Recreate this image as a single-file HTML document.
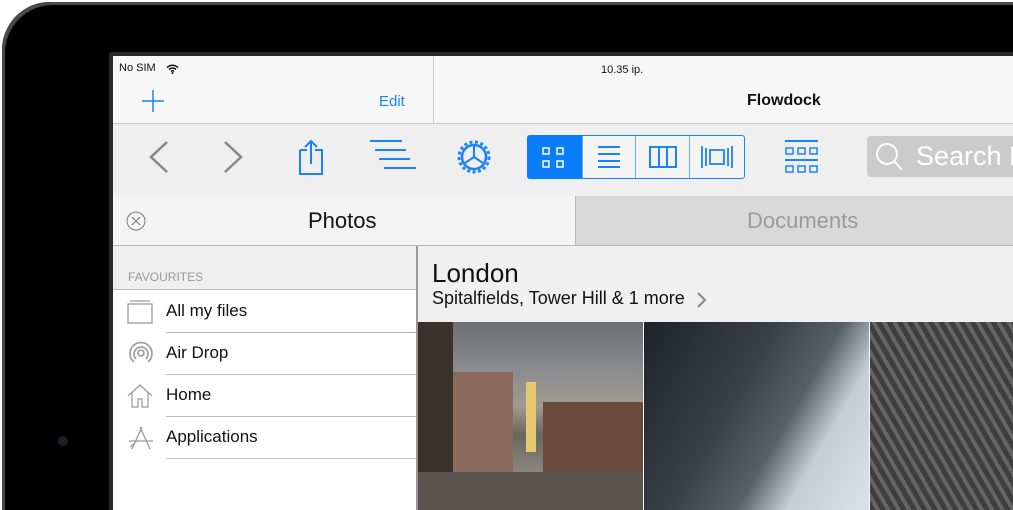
<!DOCTYPE html><html><head><style>
html,body{margin:0;width:1013px;height:510px;overflow:hidden}
body{background:#fff;font-family:"Liberation Sans",sans-serif;position:relative}
.a{position:absolute}
</style></head><body>
<div class="a" style="left:0;top:0;width:1013px;height:510px;overflow:hidden">
<div class="a" style="left:2px;top:2px;width:1011px;height:508px;border-radius:48px 0 0 0;background:#000;box-shadow:inset 3px 3px 0 0 #4a4a4a"></div>
<div class="a" style="left:109px;top:52px;width:904px;height:458px;background:#2a2a2a;border-radius:3px 0 0 0"></div>
<div class="a" style="left:58px;top:436px;width:10px;height:10px;border-radius:5px;background:#1c2128"></div>
<div class="a" style="left:113px;top:56px;width:900px;height:454px;background:#f7f7f7;overflow:hidden">
 <div class="a" style="left:6px;top:6px;font-size:11px;color:#111">No SIM</div>
 <svg class="a" style="left:53px;top:8px" width="13" height="10" viewBox="0 0 13 10"><path d="M1 3.5Q6.5-1 12 3.5M3 5.5Q6.5 2.5 10 5.5M5 7.5Q6.5 6 8 7.5" stroke="#111" stroke-width="1.5" fill="none"/><circle cx="6.5" cy="9" r="1" fill="#111"/></svg>
 <div class="a" style="left:488px;top:8px;font-size:11px;color:#111">10.35 ip.</div>
 <div class="a" style="left:320px;top:0;width:1px;height:68px;background:#ccc"></div>
 <svg class="a" style="left:28px;top:33px" width="24" height="24"><path d="M12 1V23M1 12H23" stroke="#1a82fb" stroke-width="1.5"/></svg>
 <div class="a" style="left:266px;top:37px;font-size:15px;color:#1a82fb">Edit</div>
 <div class="a" style="left:634px;top:36px;font-size:16px;font-weight:bold;color:#111">Flowdock</div>
 <div class="a" style="left:0;top:67px;width:900px;height:72px;background:#efefef;border-top:1px solid #c8c8c8;border-bottom:1px solid #b8b8b8"></div>
 <svg class="a" style="left:30px;top:84px" width="100" height="36"><path d="M24 2L8 17L24 32M82 2L98 17L82 32" stroke="#888" stroke-width="2.5" fill="none"/></svg>
 <svg class="a" style="left:184px;top:82px" width="30" height="38"><path d="M3 12H10M18 12H25V36H3V12M14 26V3M8 9L14 3L20 9" stroke="#1a82fb" stroke-width="2" fill="none"/></svg>
 <svg class="a" style="left:257px;top:84px" width="48" height="34"><path d="M0 1H32M5 10H36M9 19H40M14 28H46" stroke="#1a82fb" stroke-width="2"/></svg>
 <svg class="a" style="left:343px;top:83px" width="36" height="36" viewBox="0 0 36 36"><circle cx="18" cy="18" r="15" stroke="#1a82fb" stroke-width="3" fill="none" stroke-dasharray="3 2.5"/><circle cx="18" cy="18" r="12" stroke="#1a82fb" stroke-width="2.5" fill="none"/><path d="M18 18V7M18 18L27 24M18 18L9 24" stroke="#1a82fb" stroke-width="2"/></svg>
 <div class="a" style="left:414px;top:79px;width:216px;height:42px;border:1px solid #1a82fb;border-radius:3px;background:#f4f4f4"></div>
 <div class="a" style="left:414px;top:79px;width:55px;height:44px;background:#0a7cfa;border-radius:3px 0 0 3px"></div>
 <div class="a" style="left:469px;top:80px;width:1px;height:42px;background:#6aaefc"></div>
 <div class="a" style="left:522px;top:80px;width:1px;height:42px;background:#6aaefc"></div>
 <div class="a" style="left:576px;top:80px;width:1px;height:42px;background:#6aaefc"></div>
 <svg class="a" style="left:429px;top:90px" width="24" height="22"><g stroke="#fff" stroke-width="1.5" fill="none"><rect x="1" y="2" width="6" height="6"/><rect x="15" y="2" width="6" height="6"/><rect x="1" y="15" width="6" height="6"/><rect x="15" y="15" width="6" height="6"/></g></svg>
 <svg class="a" style="left:485px;top:90px" width="24" height="22"><path d="M0 1H22M0 8H22M0 15H22M0 21H22" stroke="#1a82fb" stroke-width="2"/></svg>
 <svg class="a" style="left:536px;top:90px" width="28" height="22"><path d="M1 1H27V21H1ZM10 1V21M18 1V21" stroke="#1a82fb" stroke-width="2" fill="none"/></svg>
 <svg class="a" style="left:588px;top:90px" width="32" height="22"><path d="M1 0V22M5 2V20M27 2V20M31 0V22M9 4H23V18H9Z" stroke="#1a82fb" stroke-width="1.8" fill="none"/></svg>
 <svg class="a" style="left:672px;top:84px" width="34" height="36"><g stroke="#1a82fb" stroke-width="1.5" fill="none"><path d="M0 1H33M0 20H33" stroke-width="2"/><rect x="1" y="8" width="7" height="6"/><rect x="13" y="8" width="7" height="6"/><rect x="25" y="8" width="7" height="6"/><rect x="1" y="26" width="7" height="6"/><rect x="13" y="26" width="7" height="6"/><rect x="25" y="26" width="7" height="6"/></g></svg>
 <div class="a" style="left:754px;top:80px;width:146px;height:41px;background:#cbcbcb;border-radius:4px 0 0 4px;overflow:hidden">
  <svg class="a" style="left:7px;top:6px" width="30" height="30"><circle cx="13" cy="12" r="10" stroke="#fff" stroke-width="2" fill="none"/><path d="M20 19L28 28" stroke="#fff" stroke-width="2"/></svg>
  <div class="a" style="left:49px;top:5px;font-size:27px;color:#fff;white-space:nowrap">Search M</div>
 </div>
 <div class="a" style="left:0;top:140px;width:462px;height:49px;background:#f4f4f4;border-bottom:1px solid #b8b8b8"></div>
 <div class="a" style="left:462px;top:140px;width:438px;height:49px;background:#d9d9d9;border-left:1px solid #b8b8b8;border-bottom:1px solid #b8b8b8"></div>
 <svg class="a" style="left:12px;top:154px" width="22" height="22"><circle cx="11" cy="11" r="9" stroke="#777" stroke-width="1" fill="none"/><path d="M7 7L15 15M15 7L7 15" stroke="#777" stroke-width="1"/></svg>
 <div class="a" style="left:195px;top:152px;font-size:22px;color:#111">Photos</div>
 <div class="a" style="left:634px;top:152px;font-size:22px;color:#9a9a9a">Documents</div>
 <div class="a" style="left:0;top:190px;width:303px;height:264px;background:#fff;border-right:2px solid #999"></div>
 <div class="a" style="left:0;top:190px;width:303px;height:43px;background:#efefef;border-bottom:1px solid #bbb"></div>
 <div class="a" style="left:15px;top:214px;font-size:12px;color:#999">FAVOURITES</div>
 <div class="a" style="left:53px;top:276px;width:250px;height:1px;background:#bbb"></div>
 <div class="a" style="left:53px;top:318px;width:250px;height:1px;background:#bbb"></div>
 <div class="a" style="left:53px;top:360px;width:250px;height:1px;background:#bbb"></div>
 <div class="a" style="left:53px;top:402px;width:250px;height:1px;background:#bbb"></div>
 <div class="a" style="left:53px;top:245px;font-size:17px;color:#111">All my files</div>
 <div class="a" style="left:53px;top:287px;font-size:17px;color:#111">Air Drop</div>
 <div class="a" style="left:53px;top:329px;font-size:17px;color:#111">Home</div>
 <div class="a" style="left:53px;top:371px;font-size:17px;color:#111">Applications</div>
 <svg class="a" style="left:14px;top:244px" width="28" height="26"><path d="M3 1H23M1 4H25V23H1Z" stroke="#999" stroke-width="1.3" fill="none"/></svg>
 <svg class="a" style="left:14px;top:284px" width="28" height="28"><g stroke="#999" stroke-width="1.6" fill="none"><path d="M7 22A11 11 0 1 1 21 22"/><path d="M9 19A7 7 0 1 1 19 19"/><circle cx="14" cy="13" r="3"/></g></svg>
 <svg class="a" style="left:14px;top:327px" width="26" height="26"><path d="M1 13L13 2L25 13M5 10V24H11V16H15V24H21V10" stroke="#999" stroke-width="1.2" fill="none"/></svg>
 <svg class="a" style="left:14px;top:369px" width="28" height="26"><path d="M5 24L15 2M23 24L13 2M2 16H26M3 22L8 18" stroke="#999" stroke-width="1.3" fill="none"/></svg>
 <div class="a" style="left:305px;top:190px;width:595px;height:76px;background:#f0f0f0"></div>
 <div class="a" style="left:319px;top:202px;font-size:26px;color:#111">London</div>
 <div class="a" style="left:319px;top:232px;font-size:18px;color:#111;white-space:nowrap">Spitalfields, Tower Hill &amp; 1 more</div>
 <svg class="a" style="left:583px;top:235px" width="12" height="18"><path d="M2 2L9 9L2 16" stroke="#888" stroke-width="2" fill="none"/></svg>
 <div class="a" style="left:305px;top:266px;width:225px;height:188px;background:linear-gradient(180deg,#6b6d70 0%,#8a8c90 25%,#a09a90 45%,#6a6560 60%,#8a8680 80%,#6a6560 100%);overflow:hidden">
  <div class="a" style="left:0;top:0;width:35px;height:188px;background:#3a302c"></div>
  <div class="a" style="left:35px;top:50px;width:60px;height:100px;background:#8a6a5a"></div>
  <div class="a" style="left:108px;top:60px;width:10px;height:70px;background:#e8c870"></div>
  <div class="a" style="left:125px;top:80px;width:100px;height:70px;background:#6a4a3a"></div>
  <div class="a" style="left:0;top:150px;width:225px;height:38px;background:#5a5550"></div>
 </div>
 <div class="a" style="left:531px;top:266px;width:225px;height:188px;background:linear-gradient(120deg,#1e2328 0%,#3a4048 40%,#566068 60%,#c8cdd4 75%,#dde2e8 100%)"></div>
 <div class="a" style="left:757px;top:266px;width:143px;height:188px;background:repeating-linear-gradient(60deg,#2a2a2a 0 5px,#555 5px 9px),#444;opacity:.9"></div>
</div>
</div>
</body></html>
